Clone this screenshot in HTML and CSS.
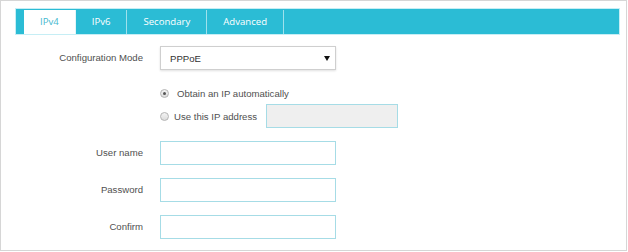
FILE: index.html
```html
<!DOCTYPE html>
<html lang="en">
<head>
    <meta charset="UTF-8">
    <title>Internet Settings</title>
    <link rel="stylesheet" href="styles.css">
</head>
<body>
    <div class="panel">
        <ul class="tabs">
            <li class="tab active">IPv4</li>
            <li class="tab">IPv6</li>
            <li class="tab">Secondary</li>
            <li class="tab">Advanced</li>
        </ul>

        <form class="form">
            <div class="row">
                <label class="label">Configuration Mode</label>
                <div class="select">
                    <span>PPPoE</span>
                    <span class="arrow"></span>
                </div>
            </div>

            <div class="row radio-row first">
                <span class="radio checked"></span>
                <span class="radio-text wide">Obtain an IP automatically</span>
            </div>
            <div class="row radio-row">
                <span class="radio"></span>
                <span class="radio-text">Use this IP address</span>
                <input class="input ip" type="text" disabled>
            </div>

            <div class="row">
                <label class="label">User name</label>
                <input class="input" type="text">
            </div>
            <div class="row">
                <label class="label">Password</label>
                <input class="input" type="password">
            </div>
            <div class="row">
                <label class="label">Confirm</label>
                <input class="input" type="password">
            </div>
        </form>
    </div>
</body>
</html>
```

FILE: styles.css
```css
body {
    margin: 0;
    background: #fff;
    font-family: "Liberation Sans", Arial, sans-serif;
    font-size: 9.6px;
    color: #505050;
}

.panel {
    width: 627px;
    height: 251px;
    box-sizing: border-box;
    border: 1px solid #d6d6d6;
}

/* TABS */
.tabs {
    display: flex;
    list-style: none;
    margin: 8px 7px 0 15px;
    padding: 1px 0 0 8px;
    height: 25px;
    box-sizing: border-box;
    background: #2bbcd5;
    box-shadow: 0 0 0 1px #c6eef5;
}

.tab {
    font-family: "Open Sans", sans-serif;
    font-size: 9.6px;
    color: #fff;
    line-height: 24px;
    height: 24px;
    padding: 0 16px;
    border-right: 1px solid rgba(255, 255, 255, 0.55);
}

.tab.active {
    background: #fff;
    color: #45b8cf;
    border-right: 1px solid #e3f6f9;
}

/* FORM */
.form {
    margin: 0;
    padding-top: 12px;
}

.row {
    display: flex;
    align-items: center;
    height: 24px;
    margin-bottom: 13px;
}

.label {
    flex: 0 0 159px;
    padding-right: 17px;
    padding-bottom: 2px;
    box-sizing: border-box;
    text-align: right;
}

.select {
    width: 176px;
    height: 24px;
    box-sizing: border-box;
    border: 1px solid #cfcfcf;
    box-shadow: 0 1px 2px rgba(0, 0, 0, 0.12);
    display: flex;
    align-items: center;
    justify-content: space-between;
    padding: 0 5px 0 9px;
    color: #333;
}

.arrow {
    width: 0;
    height: 0;
    border-left: 3px solid transparent;
    border-right: 3px solid transparent;
    border-top: 5px solid #111;
}

.row.first {
    margin-top: -1px;
    height: 22px;
    margin-bottom: 0;
}

.radio-row {
    padding-left: 159px;
}

.radio {
    width: 9px;
    height: 9px;
    border-radius: 50%;
    border: 1px solid #b4b4b4;
    background: linear-gradient(#f4f4f4, #dcdcdc);
    box-sizing: border-box;
    position: relative;
}

.radio.checked::after {
    content: "";
    position: absolute;
    top: 2px;
    left: 2px;
    width: 3px;
    height: 3px;
    border-radius: 50%;
    background: #555;
}

.radio-text {
    margin-left: 5px;
}

.radio-text.wide {
    margin-left: 8px;
}

.input {
    width: 176px;
    height: 24px;
    box-sizing: border-box;
    border: 1px solid #a6dce6;
    background: #fff;
    margin: 0;
    padding: 0 6px;
    outline: none;
}

.input.ip {
    width: 132px;
    margin-left: 9px;
    background: #efefef;
}
```
